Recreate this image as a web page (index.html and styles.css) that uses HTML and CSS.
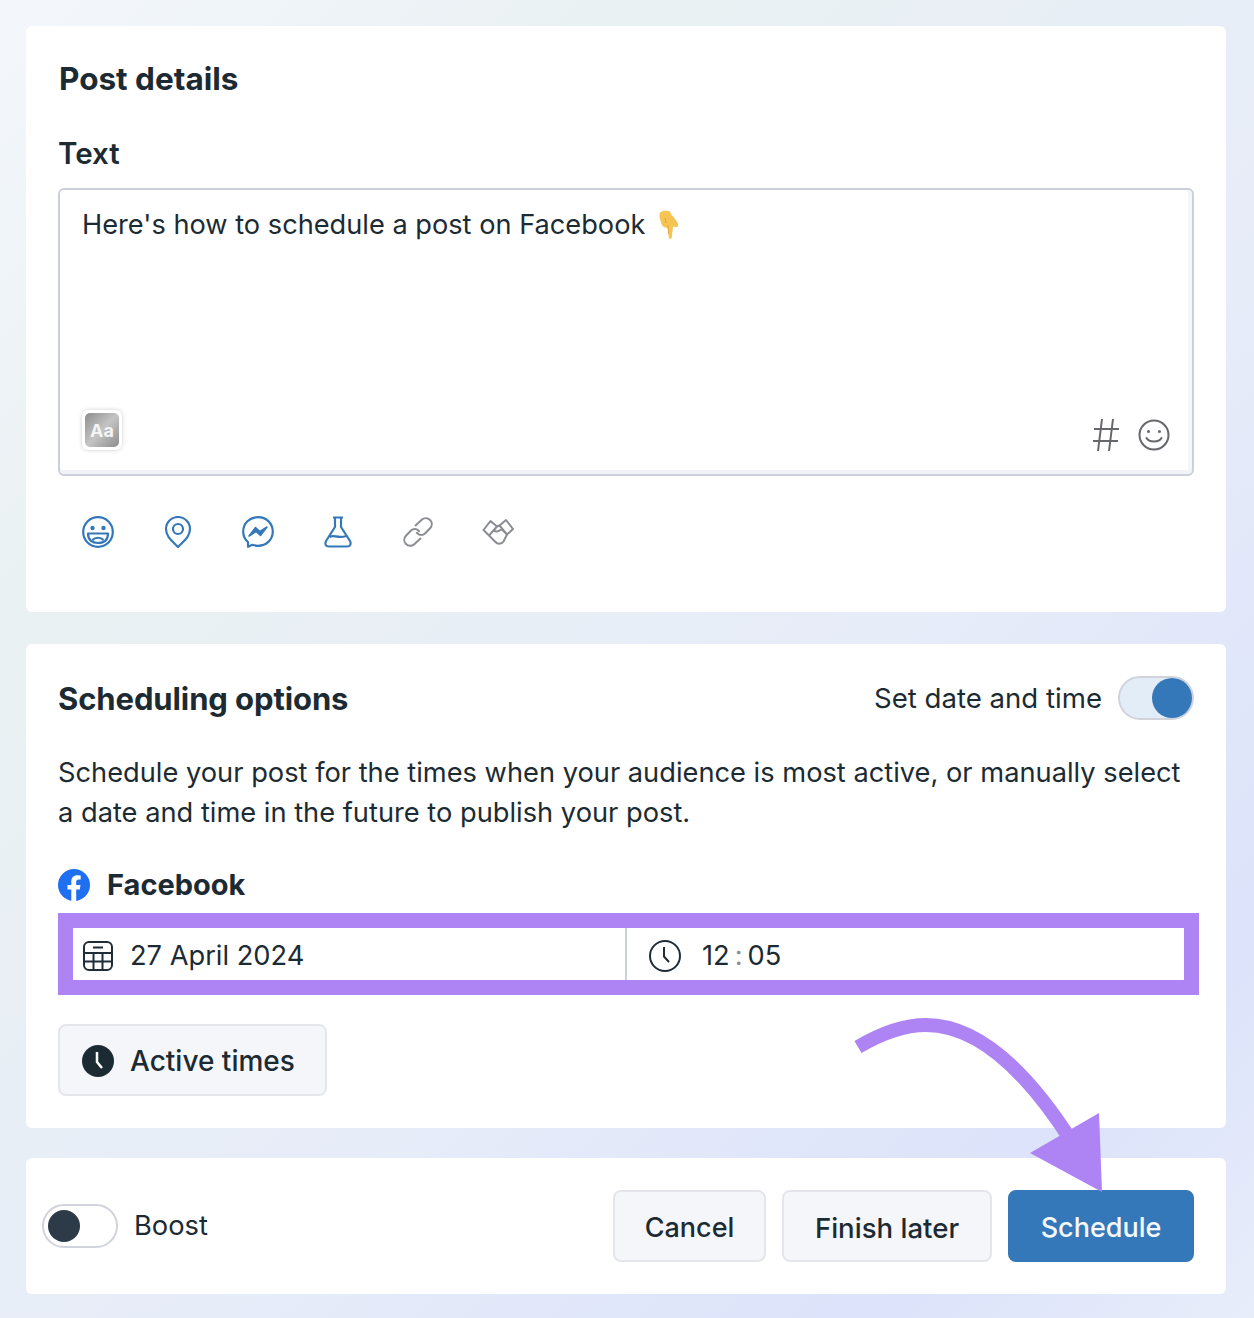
FILE: index.html
```html
<!DOCTYPE html>
<html lang="en">
<head>
<meta charset="utf-8">
<title>Post details</title>
<link rel="stylesheet" href="styles.css">
</head>
<body>
<main class="page">
  <section class="card card-post">
    <h2 class="card-title title-post">Post details</h2>
    <h3 class="field-label">Text</h3>
    <div class="editor">
      <p class="editor-text">Here's how to schedule a post on Facebook
        <svg class="emoji" viewBox="0 0 24 30" aria-hidden="true"><path d="M3 2.500C5 .5 10 0 13 1.500L14.500 5C16 6 18 9 20.500 12.500C22 15 21 17.500 18.500 17L16 16.500L14.800 27C14.500 29.500 12 29.500 11.700 27L10.800 18C7 18 4 15 4 12C2.500 9 2 5 3 2.500Z" fill="#f5c452"/><path d="M11 15L11.500 24M8 8L9 13" stroke="#dc9c30" stroke-width=".8" fill="none"/></svg>
      </p>
      <div class="editor-tools">
        <div class="aa-badge"><span class="aa-inner">Aa</span></div>
        <div class="editor-actions">
          <svg class="icon-hash" viewBox="0 0 28 34" aria-hidden="true"><path d="M10 1L6 33M21 1L17 33M2 11H27M1 23H26" stroke="#65676b" stroke-width="2" fill="none"/></svg>
          <svg class="icon-smile" viewBox="0 0 32 32" aria-hidden="true"><circle cx="16" cy="16" r="14.500" fill="none" stroke="#65676b" stroke-width="2"/><circle cx="10.500" cy="12.500" r="1.500" fill="#65676b"/><circle cx="21.500" cy="12.500" r="1.500" fill="#65676b"/><path d="M8.500 19C11 23.500 21 23.500 23.500 19" fill="none" stroke="#65676b" stroke-width="2" stroke-linecap="round"/></svg>
        </div>
      </div>
    </div>
    <div class="post-icons">
      <span class="post-icon"><svg viewBox="0 0 32 32" aria-hidden="true"><circle cx="16" cy="16" r="14.800" class="st"/><circle cx="10.500" cy="12" r="2.200" fill="#3578b9"/><circle cx="21.500" cy="12" r="2.200" fill="#3578b9"/><path d="M6 17.500H26C26 24 22 27 16 27C10 27 6 24 6 17.500ZM10.500 24C13 21 19 21 21.500 24" class="st"/></svg></span>
      <span class="post-icon"><svg viewBox="0 0 32 32" aria-hidden="true"><path d="M16 31C11 25.500 4 21 4 13A12 12 0 0 1 28 13C28 21 21 25.500 16 31Z" class="st"/><circle cx="16" cy="13" r="5" class="st"/></svg></span>
      <span class="post-icon"><svg viewBox="0 0 32 32" aria-hidden="true"><path d="M16 1.200C7.500 1.200 1.200 7.400 1.200 15.500C1.200 19.800 3 23.500 6 26V30.800L10.500 28.800C12.500 29.500 14 29.800 16 29.800C24.500 29.800 30.800 23.500 30.800 15.500S24.500 1.200 16 1.200Z" class="st"/><path d="M7 20L13.500 11.500L18 15.500L25 11L18.500 19.500L14 15.500Z" fill="#3578b9" stroke="#3578b9" stroke-width="1.500" stroke-linejoin="round"/></svg></span>
      <span class="post-icon"><svg viewBox="0 0 32 32" aria-hidden="true"><path d="M11 1.500H21M13 1.500V11L4 25C2.500 28 3.500 30.500 7 30.500H25C28.500 30.500 29.500 28 28 25L19 11V1.500" class="st"/><path d="M7.500 21C12 18 15 23 24.500 20" class="st"/></svg></span>
      <span class="post-icon"><svg viewBox="0 0 32 32" aria-hidden="true"><path d="M13 10L20 3.500C22 1.800 25.500 1.500 28 4C30.500 6.500 30 10 28.300 12L23 17.500C21 19.500 17.500 19.500 15.500 17.500L14.500 16M19 22L12 28.500C10 30.300 6.500 30.500 4 28C1.500 25.500 2 22 3.700 20L9 14.500C11 12.500 14.500 12.500 16.500 14.500L17.500 16" fill="none" stroke="#8a8d91" stroke-width="2"/></svg></span>
      <span class="post-icon"><svg viewBox="0 0 32 32" aria-hidden="true"><path d="M1.500 14L8.500 5L15 10.500L7 19.500ZM31 13L24 4L17.500 9.500L25 18.500ZM7 19.500L13 25.500C15.500 28.500 19.500 28.500 21.500 25.500L25 18.500M15 10.500L17.500 9.500M15 10.500L12 14.500C15 17.500 18 13.500 20 13.500L25 18.500" fill="none" stroke="#8a8d91" stroke-width="2" stroke-linejoin="round"/></svg></span>
    </div>
  </section>

  <section class="card card-schedule">
    <div class="schedule-head">
      <h2 class="card-title title-schedule">Scheduling options</h2>
      <div class="toggle-group">
        <span class="toggle-label">Set date and time</span>
        <span class="switch switch-on"><span class="knob knob-on"></span></span>
      </div>
    </div>
    <p class="schedule-copy">Schedule your post for the times when your audience is most active, or manually select a date and time in the future to publish your post.</p>
    <div class="platform">
      <svg class="fb-logo" viewBox="0 0 32 32" aria-hidden="true"><circle cx="16" cy="16" r="16" fill="#1f6ff2"/><path d="M13.300 32V20.500H9.500V16H13.300V12.500C13.300 8.500 15.700 6.300 19.300 6.300C21 6.300 22.700 6.600 22.700 6.600V10.400H20.800C18.800 10.400 18.200 11.600 18.200 12.900V16H22.500L21.800 20.500H18.200V32Z" fill="#fff"/></svg>
      <span class="platform-name">Facebook</span>
    </div>
    <div class="datetime">
      <div class="dt-cell dt-date">
        <svg class="dt-icon" viewBox="0 0 32 32" aria-hidden="true"><rect x="2" y="2" width="28" height="28" rx="5" fill="none" stroke="#1f2d38" stroke-width="2"/><path d="M2 13H30M2 21.500H30M11.500 13V30M20.500 13V30M11 7.500H21" fill="none" stroke="#1f2d38" stroke-width="2"/></svg>
        <span>27 April 2024</span>
      </div>
      <div class="dt-cell dt-time">
        <svg class="dt-icon" viewBox="0 0 32 32" aria-hidden="true"><circle cx="16" cy="16" r="15" fill="none" stroke="#1f2d38" stroke-width="2"/><path d="M15 7V16.500L20 22" fill="none" stroke="#1f2d38" stroke-width="2"/></svg>
        <span>12<span class="colon">:</span>05</span>
      </div>
    </div>
    <button class="btn btn-active" type="button">
      <svg class="dt-icon" viewBox="0 0 32 32" aria-hidden="true"><circle cx="16" cy="16" r="16" fill="#1c2b33"/><path d="M15 7V17L20 23" fill="none" stroke="#fff" stroke-width="2.500"/></svg>
      Active times
    </button>
  </section>

  <section class="card card-footer">
    <div class="boost">
      <span class="switch switch-off"><span class="knob knob-off"></span></span>
      <span class="boost-label">Boost</span>
    </div>
    <div class="actions">
      <button class="btn btn-cancel" type="button">Cancel</button>
      <button class="btn btn-later" type="button">Finish later</button>
      <button class="btn btn-primary" type="button">Schedule</button>
    </div>
  </section>
</main>
<svg class="arrow" viewBox="0 0 260 190" aria-hidden="true">
  <path d="M8 31C30 18 52 9 76 9C130 9 180 60 222 126" fill="none" stroke="#ae83f4" stroke-width="14"/>
  <path d="M180 137L249 97L252 176Z" fill="#ae83f4"/>
</svg>
</body>
</html>
```
FILE: styles.css
```css
* { box-sizing: border-box; }
html, body { margin: 0; padding: 0; }
body {
  position: relative;
  width: 1254px;
  height: 1318px;
  overflow: hidden;
  background: linear-gradient(135deg, #f3f7fc 0%, #eaf1f2 25%, #e7ecf9 60%, #dce3fa 85%, #e8edfa 100%);
  font-family: Inter, "Noto Sans", "Liberation Sans", sans-serif;
  color: #1c2b33;
}
.page {
  display: flex;
  flex-direction: column;
  padding: 26px 28px 0 26px;
}
.card {
  background: #fff;
  border-radius: 6px;
  width: 1200px;
}
.card-post {
  height: 586px;
  padding: 33px 32px 0 33px;
}
.card-schedule {
  height: 484px;
  margin-top: 32px;
  padding: 32px 32px 0;
}
.card-footer {
  height: 136px;
  margin-top: 30px;
  padding: 32px 32px 0 16px;
  display: flex;
  justify-content: space-between;
}
.card-title {
  margin: 0;
  line-height: 40px;
  font-weight: 700;
}
.title-post { font-size: 31.500px; }
.title-schedule { font-size: 31px; letter-spacing: -0.100px; padding-top: 1px; }
.field-label {
  margin: 36px 0 0 -1px;
  font-size: 29.500px;
  line-height: 36px;
  font-weight: 600;
}
.editor {
  margin: 17px 0 0 -1px;
  width: 1136px;
  height: 288px;
  border: 2px solid #ccd0da;
  border-radius: 6px;
  padding: 17px 22px 0;
  box-shadow: inset 0 -4px 0 #f1f3f8, inset -4px 0 0 #f4f6fa;
  display: flex;
  flex-direction: column;
  justify-content: space-between;
}
.editor-text {
  margin: 0;
  font-size: 27.200px;
  line-height: 36px;
  display: flex;
  align-items: center;
  gap: 12px;
}
.emoji { width: 24px; height: 30px; }
.editor-tools {
  display: flex;
  justify-content: space-between;
  align-items: flex-end;
  padding-bottom: 22px;
}
.aa-badge {
  width: 40px;
  height: 40px;
  padding: 3px;
  margin-bottom: 2px;
  border-radius: 6px;
  background: #fff;
  box-shadow: 0 0 4px rgba(0, 0, 0, .2);
}
.aa-inner {
  display: flex;
  align-items: center;
  justify-content: center;
  width: 100%;
  height: 100%;
  border-radius: 5px;
  color: #f4f4f4;
  font-size: 18px;
  font-weight: 700;
  background: linear-gradient(135deg, #8d8d8d, #c4c4c4 50%, #8c8c8c);
}
.editor-actions { display: flex; align-items: center; gap: 18px; }
.icon-hash { width: 28px; height: 34px; }
.icon-smile { width: 32px; height: 32px; }
.post-icons {
  display: flex;
  gap: 48px;
  margin: 40px 0 0 23px;
}
.post-icon { width: 32px; height: 32px; display: block; }
.post-icon svg { display: block; width: 32px; height: 32px; }
.st { fill: none; stroke: #3578b9; stroke-width: 2.200; stroke-linejoin: round; }
.schedule-head {
  display: flex;
  justify-content: space-between;
  align-items: center;
  height: 44px;
}
.toggle-group { display: flex; align-items: center; gap: 16px; }
.toggle-label { font-size: 27.600px; line-height: 36px; }
.boost-label { font-size: 27.300px; line-height: 36px; }
.switch {
  display: flex;
  align-items: center;
  width: 76px;
  height: 44px;
  border: 2px solid #d0d3dc;
  border-radius: 22px;
  padding: 0 0 0 4px;
}
.switch-on { background: #e2edf7; justify-content: flex-end; padding: 0; }
.knob { display: block; width: 40px; height: 40px; border-radius: 50%; }
.knob-on { background: #3578b9; }
.knob-off { width: 32px; height: 32px; background: #2d3a48; }
.schedule-copy {
  margin: 33px 0 0;
  width: 1130px;
  font-size: 27.250px;
  line-height: 40px;
}
.platform {
  display: flex;
  align-items: center;
  gap: 17px;
  margin-top: 32px;
  height: 40px;
}
.fb-logo { width: 32px; height: 32px; }
.platform-name { font-size: 29px; font-weight: 700; line-height: 40px; }
.datetime {
  display: flex;
  width: 1141px;
  height: 82px;
  margin-top: 8px;
  border: 15px solid #ae83f4;
  background: #fff;
  font-size: 27.250px;
}
.dt-cell {
  display: flex;
  align-items: center;
  gap: 16px;
  padding-left: 9px;
  padding-top: 3px;
  white-space: nowrap;
}
.dt-date { width: 554px; flex: none; border-right: 2px solid #ccd0da; }
.dt-time { flex: 1; padding-left: 22px; gap: 21px; }
.dt-icon { width: 32px; height: 32px; flex: none; }
.colon { color: #8a8d91; margin: 0 5px; }
.btn {
  display: flex;
  align-items: center;
  justify-content: center;
  height: 72px;
  border: 2px solid #e4e6eb;
  border-radius: 8px;
  background: #f5f6f9;
  color: #1c2b33;
  padding: 3px 0 0;
  font: 500 27px/36px Inter, "Noto Sans", sans-serif;
}
.btn-active {
  width: 269px;
  margin-top: 29px;
  gap: 16px;
  justify-content: flex-start;
  padding: 1px 0 0 22px;
  font-size: 28px;
}
.boost { display: flex; align-items: center; gap: 16px; height: 72px; }
.actions { display: flex; gap: 16px; }
.btn-cancel { width: 153px; }
.btn-later { width: 210px; font-size: 27.600px; }
.btn-primary {
  width: 186px;
  background: #3578b9;
  border-color: #3578b9;
  color: #f5f9fd;
}
.arrow {
  position: absolute;
  left: 850px;
  top: 1016px;
  width: 260px;
  height: 190px;
}
```
